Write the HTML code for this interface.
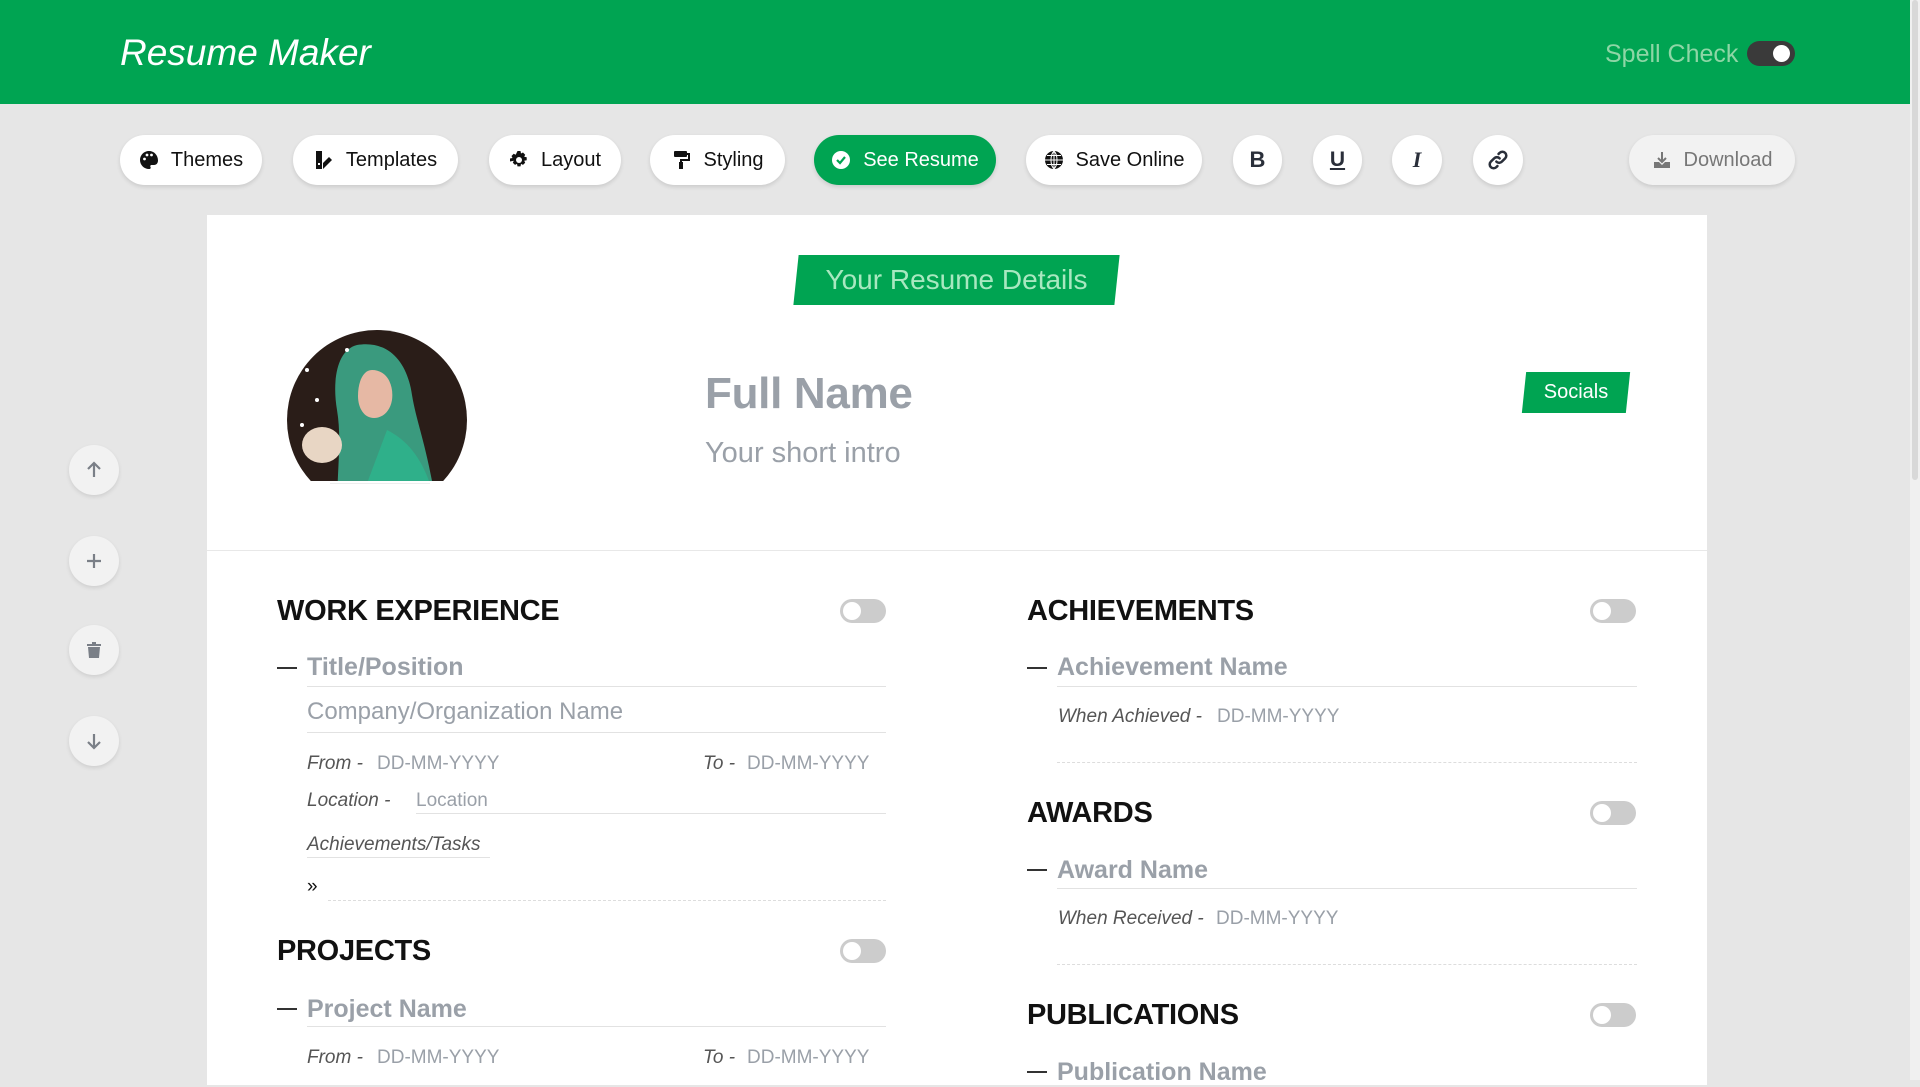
<!DOCTYPE html>
<html><head><meta charset="utf-8"><style>
*{margin:0;padding:0;box-sizing:border-box}
body{width:1920px;height:1080px;overflow:hidden;background:#e6e6e6;font-family:"Liberation Sans",sans-serif;position:relative}
.a{position:absolute}
.hdr{left:0;top:0;width:1910px;height:104px;background:#00a452}
.btn{position:absolute;top:135px;height:50px;border-radius:25px;background:#fff;box-shadow:0 2px 4px rgba(0,0,0,.12);display:flex;align-items:center;justify-content:center;font-size:20px;color:#111;gap:12px}
.btn svg{width:20px;height:20px}
.card{left:207px;top:215px;width:1500px;height:870px;background:#fff}
.h{position:absolute;font-size:29px;font-weight:bold;color:#111;line-height:36px;letter-spacing:-0.3px}
.tg{position:absolute;width:46px;height:24px;border-radius:12px;background:#ccc}
.tg::after{content:"";position:absolute;left:3px;top:3px;width:18px;height:18px;border-radius:50%;background:#fff}
.t{position:absolute;color:#9aa0a8;white-space:nowrap}
.ln{position:absolute;height:1px;background:#e2e2e2}
.dl{position:absolute;border-top:1px dashed #ddd;height:0}
.it{font-style:italic;color:#555}
.side{position:absolute;left:69px;width:50px;height:50px;border-radius:50%;background:#f2f2f2;box-shadow:0 2px 4px rgba(0,0,0,.1);display:flex;align-items:center;justify-content:center}
</style></head><body>
<div class="a hdr"></div>
<div class="a" style="left:120px;top:30px;font-size:37px;font-style:italic;color:#fff;line-height:46px">Resume Maker</div>
<div class="a" style="left:1605px;top:39px;font-size:25px;color:#8ed6a6;line-height:30px">Spell Check</div>
<div class="a" style="left:1747px;top:41px;width:48px;height:25px;border-radius:13px;background:#3a3a3a"><div class="a" style="right:5px;top:4px;width:17px;height:17px;border-radius:50%;background:#fff"></div></div>
<div class="a" style="left:1910px;top:0;width:10px;height:1080px;background:#f0f0f0"><div class="a" style="left:2px;top:0;width:6px;height:480px;background:#d8d8d8;border-radius:3px"></div></div>

<div class="btn" style="left:120px;width:142px"><svg viewBox="0 0 20 20"><path d="M10 1C5 1 1 5 1 10s4 9 9 9c1.5 0 2-1 1.5-2-.6-1 0-2 1.2-2H15c2.5 0 4-2 4-4.5C19 5 15 1 10 1z" fill="#111"/><circle cx="5.5" cy="9" r="1.4" fill="#fff"/><circle cx="8" cy="5" r="1.4" fill="#fff"/><circle cx="12.5" cy="5" r="1.4" fill="#fff"/></svg>Themes</div>
<div class="btn" style="left:293px;width:165px"><svg viewBox="0 0 20 20"><rect x="2" y="1" width="6" height="18" fill="#111"/><path d="M9 19l9-9-3-3-6 6z" fill="#111"/><rect x="4" y="13" width="2" height="2" fill="#fff"/></svg>Templates</div>
<div class="btn" style="left:489px;width:132px"><svg viewBox="0 0 20 20"><path d="M8.5 1h3l.5 2.5 2-1 2.2 2.2-1 2 2.5.5v3l-2.5.5 1 2-2.2 2.2-2-1-.5 2.5h-3l-.5-2.5-2 1-2.2-2.2 1-2L1 11.5v-3l2.5-.5-1-2 2.2-2.2 2 1z" fill="#111"/><circle cx="10" cy="10" r="3" fill="#fff"/></svg>Layout</div>
<div class="btn" style="left:650px;width:135px"><svg viewBox="0 0 20 20"><rect x="3" y="1" width="13" height="6" rx="1" fill="#111"/><path d="M16 4h2v6h-8v2" stroke="#111" stroke-width="2" fill="none"/><rect x="8" y="12" width="4" height="7" fill="#111"/></svg>Styling</div>
<div class="btn" style="left:814px;width:182px;background:#00a452;color:#fff"><svg viewBox="0 0 20 20"><circle cx="10" cy="10" r="9" fill="#fff"/><path d="M6 10l3 3 5-6" stroke="#00a452" stroke-width="2.2" fill="none"/></svg>See Resume</div>
<div class="btn" style="left:1026px;width:176px"><svg viewBox="0 0 20 20"><circle cx="10" cy="10" r="9" fill="#111"/><path d="M1 10h18M10 1v18M3 5.5h14M3 14.5h14M10 1c-4 4-4 14 0 18M10 1c4 4 4 14 0 18" stroke="#fff" stroke-width="1" fill="none"/></svg>Save Online</div>
<div class="btn" style="left:1233px;width:49px;font-weight:bold;font-size:22px;color:#2a2f3a">B</div>
<div class="btn" style="left:1313px;width:49px;font-weight:bold;font-size:21px;color:#2a2f3a;text-decoration:underline">U</div>
<div class="btn" style="left:1392px;width:50px;font-weight:bold;font-style:italic;font-size:22px;color:#2a2f3a;font-family:'Liberation Serif',serif">I</div>
<div class="btn" style="left:1473px;width:50px"><svg viewBox="0 0 20 20" style="width:22px;height:22px"><path d="M8.5 11.5a3.5 3.5 0 005 0l3-3a3.5 3.5 0 00-5-5l-1 1M11.5 8.5a3.5 3.5 0 00-5 0l-3 3a3.5 3.5 0 005 5l1-1" stroke="#2a2f3a" stroke-width="2.3" fill="none" stroke-linecap="round"/></svg></div>
<div class="btn" style="left:1629px;width:166px;background:#f2f2f2;color:#777"><svg viewBox="0 0 20 20"><path d="M10 2v10M6 8l4 4 4-4" stroke="#777" stroke-width="2" fill="none"/><path d="M2 12v6h16v-6h-5l-3 3-3-3z" fill="#777"/></svg>Download</div>

<div class="side" style="top:445px"><svg width="20" height="20" viewBox="0 0 20 20"><path d="M10 17V3M4 9l6-6 6 6" stroke="#7a7f87" stroke-width="2.2" fill="none"/></svg></div>
<div class="side" style="top:536px"><svg width="20" height="20" viewBox="0 0 20 20"><path d="M10 3v14M3 10h14" stroke="#7a7f87" stroke-width="2.2"/></svg></div>
<div class="side" style="top:625px"><svg width="20" height="20" viewBox="0 0 20 20"><path d="M3 4h14v2H3zM8 2h4v2H8zM4 7h12l-1 11H5z" fill="#7a7f87"/></svg></div>
<div class="side" style="top:716px"><svg width="20" height="20" viewBox="0 0 20 20"><path d="M10 3v14M4 11l6 6 6-6" stroke="#7a7f87" stroke-width="2.2" fill="none"/></svg></div>

<div class="a card"></div>
<div class="a" style="left:796px;top:255px;width:321px;height:50px;background:#00a452;transform:skewX(-6deg)"></div>
<div class="a" style="left:796px;top:255px;width:321px;height:50px;line-height:50px;text-align:center;font-size:28px;color:#a8e8c0">Your Resume Details</div>

<div class="a" style="left:287px;top:330px;width:180px;height:151px;overflow:hidden">
<svg width="180" height="180" viewBox="0 0 180 180"><defs><clipPath id="c"><circle cx="90" cy="90" r="90"/></clipPath></defs><g clip-path="url(#c)"><rect width="180" height="180" fill="#2a1d18"/><path d="M70 15c30-5 50 15 55 50 5 30 15 50 25 115H50c0-40 5-70 0-100-5-30 0-60 20-65z" fill="#3a9a7e"/><path d="M85 40c15 0 22 15 20 30-2 12-10 18-18 18-10 0-16-10-16-22 0-14 5-26 14-26z" fill="#e6b8a4"/><path d="M100 100c20 10 40 30 50 80H70z" fill="#2fb08a"/><ellipse cx="35" cy="115" rx="20" ry="18" fill="#e8d6c4"/><circle cx="20" cy="40" r="2" fill="#fff"/><circle cx="30" cy="70" r="2" fill="#fff"/><circle cx="60" cy="20" r="2" fill="#fff"/><circle cx="15" cy="95" r="2" fill="#fff"/></g></svg></div>
<div class="a" style="left:330px;top:483px;width:100px;height:1px;background:#eee"></div>

<div class="t" style="left:705px;top:368px;font-size:44px;font-weight:bold;line-height:52px;letter-spacing:-0.3px">Full Name</div>
<div class="t" style="left:705px;top:435px;font-size:29px;line-height:36px">Your short intro</div>
<div class="a" style="left:1524px;top:372px;width:104px;height:41px;background:#00a452;transform:skewX(-6deg)"></div>
<div class="a" style="left:1524px;top:372px;width:104px;height:41px;line-height:41px;text-align:center;color:#fff;font-size:20px">Socials</div>
<div class="ln" style="left:207px;top:550px;width:1500px;background:#e8e8e8"></div>

<div class="h" style="left:277px;top:593px">WORK EXPERIENCE</div>
<div class="tg" style="left:840px;top:599px"></div>
<div class="a" style="left:277px;top:667px;width:20px;height:2px;background:#333"></div>
<div class="t" style="left:307px;top:652px;font-size:25px;font-weight:bold;line-height:30px">Title/Position</div>
<div class="ln" style="left:307px;top:686px;width:579px"></div>
<div class="t" style="left:307px;top:697px;font-size:24px;line-height:30px">Company/Organization Name</div>
<div class="ln" style="left:307px;top:732px;width:579px"></div>
<div class="t it" style="left:307px;top:752px;font-size:19px;line-height:24px">From -</div>
<div class="t" style="left:377px;top:752px;font-size:19px;line-height:24px">DD-MM-YYYY</div>
<div class="t it" style="left:703px;top:752px;font-size:19px;line-height:24px">To -</div>
<div class="t" style="left:747px;top:752px;font-size:19px;line-height:24px">DD-MM-YYYY</div>
<div class="t it" style="left:307px;top:789px;font-size:19px;line-height:24px">Location -</div>
<div class="t" style="left:416px;top:789px;font-size:19px;line-height:24px">Location</div>
<div class="ln" style="left:416px;top:813px;width:470px"></div>
<div class="t it" style="left:307px;top:833px;font-size:19px;line-height:24px">Achievements/Tasks</div>
<div class="ln" style="left:307px;top:857px;width:183px"></div>
<div class="t" style="left:307px;top:875px;font-size:19px;line-height:24px;color:#111">»</div>
<div class="dl" style="left:328px;top:900px;width:558px"></div>

<div class="h" style="left:277px;top:933px">PROJECTS</div>
<div class="tg" style="left:840px;top:939px"></div>
<div class="a" style="left:277px;top:1008px;width:20px;height:2px;background:#333"></div>
<div class="t" style="left:307px;top:994px;font-size:25px;font-weight:bold;line-height:30px">Project Name</div>
<div class="ln" style="left:307px;top:1026px;width:579px"></div>
<div class="t it" style="left:307px;top:1046px;font-size:19px;line-height:24px">From -</div>
<div class="t" style="left:377px;top:1046px;font-size:19px;line-height:24px">DD-MM-YYYY</div>
<div class="t it" style="left:703px;top:1046px;font-size:19px;line-height:24px">To -</div>
<div class="t" style="left:747px;top:1046px;font-size:19px;line-height:24px">DD-MM-YYYY</div>

<div class="h" style="left:1027px;top:593px">ACHIEVEMENTS</div>
<div class="tg" style="left:1590px;top:599px"></div>
<div class="a" style="left:1027px;top:667px;width:20px;height:2px;background:#333"></div>
<div class="t" style="left:1057px;top:652px;font-size:25px;font-weight:bold;line-height:30px">Achievement Name</div>
<div class="ln" style="left:1057px;top:686px;width:580px"></div>
<div class="t it" style="left:1058px;top:705px;font-size:19px;line-height:24px">When Achieved -</div>
<div class="t" style="left:1217px;top:705px;font-size:19px;line-height:24px">DD-MM-YYYY</div>
<div class="dl" style="left:1057px;top:762px;width:580px"></div>

<div class="h" style="left:1027px;top:795px">AWARDS</div>
<div class="tg" style="left:1590px;top:801px"></div>
<div class="a" style="left:1027px;top:869px;width:20px;height:2px;background:#333"></div>
<div class="t" style="left:1057px;top:855px;font-size:25px;font-weight:bold;line-height:30px">Award Name</div>
<div class="ln" style="left:1057px;top:888px;width:580px"></div>
<div class="t it" style="left:1058px;top:907px;font-size:19px;line-height:24px">When Received -</div>
<div class="t" style="left:1216px;top:907px;font-size:19px;line-height:24px">DD-MM-YYYY</div>
<div class="dl" style="left:1057px;top:964px;width:580px"></div>

<div class="h" style="left:1027px;top:997px">PUBLICATIONS</div>
<div class="tg" style="left:1590px;top:1003px"></div>
<div class="a" style="left:1027px;top:1071px;width:20px;height:2px;background:#333"></div>
<div class="t" style="left:1057px;top:1057px;font-size:25px;font-weight:bold;line-height:30px">Publication Name</div>
</body></html>
